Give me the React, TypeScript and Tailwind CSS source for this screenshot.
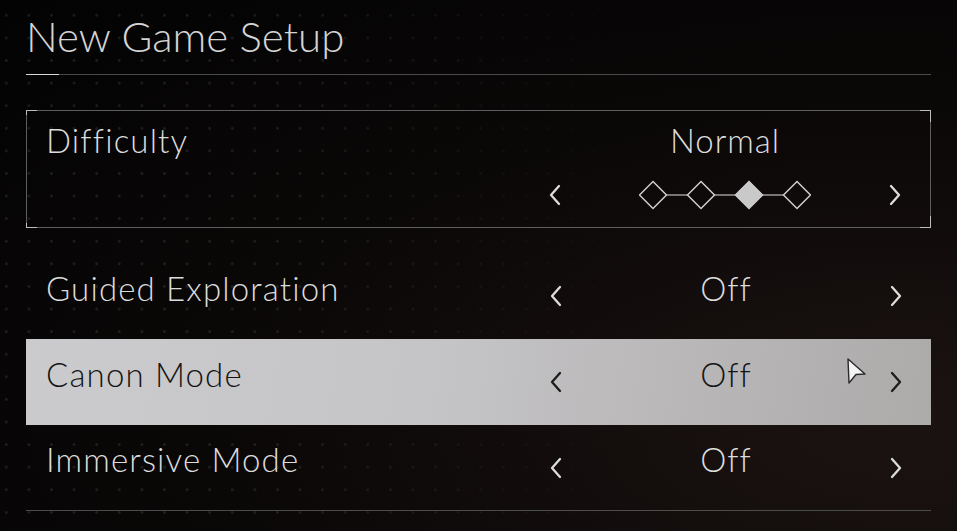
import React from "react";

/* ---------------------- ICONS ---------------------- */

const Chevron = ({ dir, dark }: { dir: "left" | "right"; dark?: boolean }) => (
  <svg width="14" height="22" viewBox="0 0 14 22" className="block">
    <path
      d={dir === "left" ? "M11 2 L3 11 L11 20" : "M3 2 L11 11 L3 20"}
      fill="none"
      stroke={dark ? "#1c1c1c" : "#dcdcdc"}
      strokeWidth="2.3"
      strokeLinecap="round"
      strokeLinejoin="round"
    />
  </svg>
);

const DifficultyDiamonds = ({ active }: { active: number }) => {
  const centers = [14, 62, 110, 158];
  const r = 13.5;
  return (
    <svg width="172" height="32" viewBox="0 0 172 32" className="block">
      {centers.slice(0, -1).map((cx, i) => (
        <line
          key={`l${i}`}
          x1={cx + r}
          y1="16"
          x2={centers[i + 1] - r}
          y2="16"
          stroke="#bdbdbd"
          strokeWidth="1.2"
        />
      ))}
      {centers.map((cx, i) => (
        <polygon
          key={cx}
          points={`${cx},${16 - r} ${cx + r},16 ${cx},${16 + r} ${cx - r},16`}
          fill={i === active ? "#c9c9c9" : "none"}
          stroke="#cfcfcf"
          strokeWidth="1.5"
        />
      ))}
    </svg>
  );
};

const Cursor = () => (
  <svg width="22" height="28" viewBox="0 0 22 28" className="block">
    <polygon
      points="2,2 19,17 10,17.5 3,26"
      fill="#f4f4f4"
      stroke="#2a2a2a"
      strokeWidth="1.4"
      strokeLinejoin="round"
    />
  </svg>
);

/* ---------------------- ROWS ---------------------- */

const OptionRow = ({
  label,
  value,
  selected,
  last,
}: {
  label: string;
  value: string;
  selected?: boolean;
  last?: boolean;
}) => (
  <div
    className={`relative h-[86px] flex items-center ${
      selected
        ? "bg-[linear-gradient(100deg,#cbcbcd_0%,#c5c4c6_45%,#b9b7b8_72%,#adaaaa_100%)] text-[#141414]"
        : "text-[#dcdcdc]"
    } ${last ? "border-b border-[#4c4c4c]" : ""}`}
  >
    <div className="flex-1 pl-[20px] mb-[16px] text-[33px] leading-none font-light tracking-[0.035em]">
      {label}
    </div>
    <div className="w-[380px] mr-[15px] grid grid-cols-[40px_1fr_40px] items-center">
      <div className="flex justify-center">
        <Chevron dir="left" dark={selected} />
      </div>
      <div className="text-center text-[33px] leading-none font-light tracking-[0.03em] mb-[16px]">
        {value}
      </div>
      <div className="flex justify-center">
        <Chevron dir="right" dark={selected} />
      </div>
    </div>
    {selected && (
      <div className="absolute left-[820px] top-[18px]">
        <Cursor />
      </div>
    )}
  </div>
);

/* ---------------------- MAIN ---------------------- */

export default function App() {
  return (
    <div
      className="relative w-full min-h-screen overflow-hidden bg-[radial-gradient(ellipse_at_95%_80%,#1b1312_0%,#0a0707_55%,#030303_100%)]"
      style={{ fontFamily: "Lato, 'Noto Sans', sans-serif" }}
    >
      {/* dot grid */}
      <div className="pointer-events-none absolute inset-0 bg-[radial-gradient(circle,rgba(255,255,255,0.1)_1px,transparent_1.7px)] bg-size-[22.6px_22.6px] bg-[length:22.6px_22.6px] bg-position-[-5px_4px] bg-[position:-5px_4px] [mask-image:linear-gradient(to_right,black_0%,black_25%,transparent_70%)]" />

      <div className="relative px-[26px]">
        <h1 className="pt-[15px] text-[42px] leading-none font-light text-[#d4d4d4]">
          New Game Setup
        </h1>

        <div className="mt-[17px] flex h-px">
          <div className="w-[33px] bg-[#d8d8d8]" />
          <div className="flex-1 bg-[#4a4a4a]" />
        </div>

        {/* Difficulty */}
        <div className="relative mt-[35px] h-[118px] border border-[#5e5e5e] flex">
          <div className="absolute -left-px -top-px w-[11px] h-[5px] border-l border-t border-[#bdbdbd]" />
          <div className="absolute -left-px -bottom-px w-[11px] h-[5px] border-l border-b border-[#bdbdbd]" />
          <div className="absolute -right-px -top-px w-[11px] h-[12px] border-r border-t border-[#bdbdbd]" />
          <div className="absolute -right-px -bottom-px w-[11px] h-[12px] border-r border-b border-[#bdbdbd]" />

          <div className="flex-1 pl-[19px] pt-[13px] text-[33px] leading-none font-light tracking-[0.035em] text-[#dcdcdc]">
            Difficulty
          </div>
          <div className="w-[380px] mr-[15px] pt-[13px] grid grid-cols-[40px_1fr_40px] grid-rows-[33px_auto] text-[#dcdcdc]">
            <div />
            <div className="text-center text-[33px] leading-none font-light tracking-[0.03em]">
              Normal
            </div>
            <div />
            <div className="flex justify-center items-center mt-[5px]">
              <Chevron dir="left" />
            </div>
            <div className="flex justify-center items-center mt-[5px]">
              <DifficultyDiamonds active={2} />
            </div>
            <div className="flex justify-center items-center mt-[5px]">
              <Chevron dir="right" />
            </div>
          </div>
        </div>

        <div className="mt-[25px]">
          <OptionRow label="Guided Exploration" value="Off" />
          <OptionRow label="Canon Mode" value="Off" selected />
          <OptionRow label="Immersive Mode" value="Off" last />
        </div>
      </div>
    </div>
  );
}
